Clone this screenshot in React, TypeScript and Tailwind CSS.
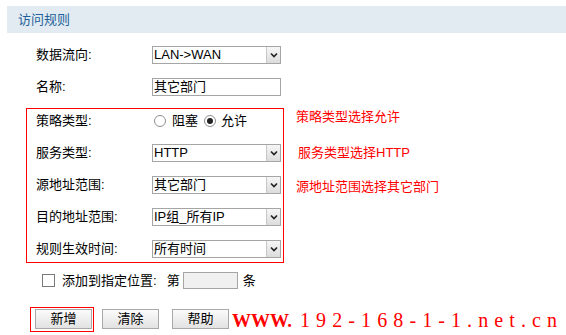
import React from 'react'

const font = '[font-family:"Liberation_Sans","Noto_Sans_CJK_SC",sans-serif]'

const SelectBox = ({ value }: { value: string }) => (
    <div className="w-[129px] h-[18px] border border-[#a5a5a5] bg-white flex items-stretch">
        <div className="flex-1 pl-[1px] text-[13px] leading-[16px] text-black">{value}</div>
        <div className="w-[14px] border-l border-[#c8c8c8] bg-gradient-to-b from-[#f6f6f6] to-[#dcdcdc] flex items-center justify-center">
            <svg width="8" height="6" viewBox="0 0 8 6">
                <path d="M1 1.5 L4 4.5 L7 1.5" fill="none" stroke="#222" strokeWidth="1.6" />
            </svg>
        </div>
    </div>
)

const Radio = ({ checked }: { checked?: boolean }) => (
    <span className="w-[12px] h-[12px] rounded-full border border-[#8f8f8f] bg-white flex items-center justify-center">
        {checked && <span className="w-[6px] h-[6px] rounded-full bg-[#222]" />}
    </span>
)

const Row = ({ label, children }: { label: string, children: React.ReactNode }) => (
    <div className="flex items-center h-[18px]">
        <div className="w-[116px] text-[13px] text-black">{label}</div>
        {children}
    </div>
)

const Btn = ({ text }: { text: string }) => (
    <button className="block w-[57px] h-[20px] border border-[#a9a9a9] bg-gradient-to-b from-[#fbfbfb] to-[#e2e2e2] text-[13px] leading-[18px] text-black">
        {text}
    </button>
)

export default function App() {
    return (
        <div className={`w-[566px] h-[335px] bg-white overflow-hidden ${font}`}>
            <div className="mt-[6px] ml-[7px] h-[27px] bg-[#e1ebf1] flex items-center pl-[11px]">
                <span className="text-[13px] text-[#1f5f9a]">访问规则</span>
            </div>

            <div className="pl-[36px] mt-[13px] flex flex-col gap-[14px]">
                <Row label="数据流向:"><SelectBox value="LAN->WAN" /></Row>
                <Row label="名称:">
                    <div className="w-[129px] h-[18px] border border-[#a5a5a5] bg-white pl-[1px] text-[13px] leading-[16px]">其它部门</div>
                </Row>
            </div>

            <div className="flex mt-[12px] ml-[26px]">
                <div className="w-[258px] border border-[#ff0000] pl-[9px] pt-[3px] pb-[4px] flex flex-col gap-[14px]">
                    <Row label="策略类型:">
                        <div className="flex items-center text-[13px] pl-[2px]">
                            <Radio />
                            <span className="ml-[6px]">阻塞</span>
                            <span className="ml-[6px]"><Radio checked /></span>
                            <span className="ml-[5px]">允许</span>
                        </div>
                    </Row>
                    <Row label="服务类型:"><SelectBox value="HTTP" /></Row>
                    <Row label="源地址范围:"><SelectBox value="其它部门" /></Row>
                    <Row label="目的地址范围:"><SelectBox value="IP组_所有IP" /></Row>
                    <Row label="规则生效时间:"><SelectBox value="所有时间" /></Row>
                </div>
                <div className="pl-[12px] flex flex-col text-[13px] leading-[17px] text-[#ff0000]">
                    <span>策略类型选择允许</span>
                    <span className="mt-[19px] ml-[2px]">服务类型选择HTTP</span>
                    <span className="mt-[17px]">源地址范围选择其它部门</span>
                </div>
            </div>

            <div className="flex items-center h-[17px] mt-[9px] ml-[42px] text-[13px] text-black">
                <span className="w-[13px] h-[13px] border border-[#7a7a7a] bg-white" />
                <span className="ml-[7px]">添加到指定位置:</span>
                <span className="ml-[10px]">第</span>
                <span className="ml-[3px] w-[55px] h-[17px] border border-[#a5a5a5] bg-[#f0f0f0]" />
                <span className="ml-[5px]">条</span>
            </div>

            <div className="flex items-start mt-[18px] ml-[30px]">
                <div className="border border-[#ff0000] pl-[4px] pr-[1px] pt-[1px] pb-[2px]">
                    <Btn text="新增" />
                </div>
                <div className="ml-[8px] mt-[2px]"><Btn text="清除" /></div>
                <div className="ml-[13px] mt-[2px]"><Btn text="帮助" /></div>
                <div className="ml-[3px] mt-[2px] shrink-0 whitespace-nowrap flex items-baseline text-[#ff0000] [font-family:'Liberation_Serif',serif] leading-[22px]">
                    <span className="text-[19px] font-bold">WWW.</span>
                    <span className="ml-[8px] text-[20px] tracking-[6.1px]">192-168-1-1.net.cn</span>
                </div>
            </div>
        </div>
    )
}
